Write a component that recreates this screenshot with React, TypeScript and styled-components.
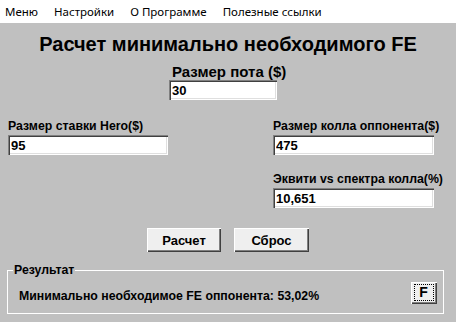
import React from "react";
import styled, { createGlobalStyle } from "styled-components";

const GlobalStyle = createGlobalStyle`
  html, body {
    margin: 0;
    padding: 0;
    background: #c0c0c0;
  }
  body {
    font-family: "Liberation Sans", Arial, sans-serif;
  }
`;

const Window = styled.div`
  width: 456px;
  height: 322px;
  background: #c0c0c0;
  display: flex;
  flex-direction: column;
  overflow: hidden;
`;

const MenuBar = styled.nav`
  height: 23px;
  background: #fff;
  display: flex;
  align-items: center;
  padding-left: 5px;
  gap: 16px;
  font-family: "Noto Sans", sans-serif;
  font-size: 11.5px;
  color: #000;
`;

const MenuItem = styled.span`
  line-height: 23px;
`;

const Body = styled.div`
  flex: 1;
  display: flex;
  flex-direction: column;
  padding: 0 0 0 8px;
`;

const Title = styled.h1`
  margin: 9px 0 0 -8px;
  text-align: center;
  font-size: 20px;
  font-weight: bold;
  line-height: 24px;
`;

const Field = styled.div<{ $width: number }>`
  display: flex;
  flex-direction: column;
  width: ${(p) => p.$width}px;
`;

const Label = styled.label<{ $big?: boolean }>`
  font-size: ${(p) => (p.$big ? 15 : 12.3)}px;
  font-weight: bold;
  line-height: ${(p) => (p.$big ? 17 : 14)}px;
  margin-bottom: ${(p) => (p.$big ? 0 : 2)}px;
  margin-left: ${(p) => (p.$big ? 3 : 0)}px;
  white-space: nowrap;
`;

const Input = styled.input`
  box-sizing: border-box;
  height: 20px;
  width: 100%;
  margin: 0;
  padding: 1px 3px 0;
  font-family: "Liberation Sans", Arial, sans-serif;
  font-size: 13px;
  font-weight: bold;
  background: #fff;
  border: 0;
  outline: none;
  box-shadow: inset 1px 1px 0 #808080, inset 2px 2px 0 #404040,
    inset -1px -1px 0 #ffffff, inset -2px -2px 0 #dfdfdf;
`;

const PotRow = styled.div`
  display: flex;
  margin-top: 7px;
  padding-left: 161px;
`;

const PairRow = styled.div`
  display: flex;
  justify-content: space-between;
  margin-top: 19px;
  padding-right: 22px;
`;

const EquityRow = styled.div`
  display: flex;
  justify-content: flex-end;
  margin-top: 17px;
  padding-right: 22px;
`;

const ButtonRow = styled.div`
  display: flex;
  gap: 13px;
  margin-top: 20px;
  padding-left: 139px;
`;

const Button = styled.button<{ $w: number; $h: number }>`
  display: inline-flex;
  align-items: center;
  justify-content: center;
  width: ${(p) => p.$w}px;
  height: ${(p) => p.$h}px;
  margin: 0;
  padding: 0;
  background: #efefef;
  border: 0;
  font-family: "Liberation Sans", Arial, sans-serif;
  font-size: 13px;
  font-weight: bold;
  color: #000;
  box-shadow: inset 1px 1px 0 #ffffff, inset -1px -1px 0 #404040,
    inset -2px -2px 0 #808080;
`;

const FocusBox = styled.span`
  display: inline-flex;
  align-items: center;
  justify-content: center;
  width: 20px;
  height: 17px;
  margin: -1px 0 0 -1px;
  border: 1px dotted #000;
  box-sizing: border-box;
  font-size: 14px;
`;

const Group = styled.fieldset`
  margin: 12px 0 0 -1px;
  width: 437px;
  box-sizing: border-box;
  padding: 0;
  border: 1px solid #fff;
`;

const Legend = styled.legend`
  padding: 0 1px;
  margin-left: 5px;
  font-size: 12.3px;
  font-weight: bold;
  line-height: 12px;
`;

const GroupContent = styled.div`
  height: 37px;
  display: flex;
  align-items: center;
  justify-content: space-between;
  padding: 0 6px 0 11px;
`;

const ResultText = styled.span`
  font-size: 12.3px;
  font-weight: bold;
  margin-top: 3px;
`;

const FButtonSlot = styled.div`
  margin-top: -4px;
`;

export default function App() {
  return (
    <Window>
      <GlobalStyle />
      <MenuBar>
        <MenuItem>Меню</MenuItem>
        <MenuItem>Настройки</MenuItem>
        <MenuItem>О Программе</MenuItem>
        <MenuItem>Полезные ссылки</MenuItem>
      </MenuBar>
      <Body>
        <Title>Расчет минимально необходимого FE</Title>
        <PotRow>
          <Field $width={108}>
            <Label $big>Размер пота ($)</Label>
            <Input defaultValue="30" />
          </Field>
        </PotRow>
        <PairRow>
          <Field $width={160}>
            <Label>Размер ставки Hero($)</Label>
            <Input defaultValue="95" />
          </Field>
          <Field $width={161}>
            <Label>Размер колла оппонента($)</Label>
            <Input defaultValue="475" />
          </Field>
        </PairRow>
        <EquityRow>
          <Field $width={161}>
            <Label>Эквити vs спектра колла(%)</Label>
            <Input defaultValue="10,651" />
          </Field>
        </EquityRow>
        <ButtonRow>
          <Button $w={74} $h={24}>Расчет</Button>
          <Button $w={75} $h={24}>Сброс</Button>
        </ButtonRow>
        <Group>
          <Legend>Результат</Legend>
          <GroupContent>
            <ResultText>Минимально необходимое FE оппонента: 53,02%</ResultText>
            <FButtonSlot>
              <Button $w={26} $h={22}>
                <FocusBox>F</FocusBox>
              </Button>
            </FButtonSlot>
          </GroupContent>
        </Group>
      </Body>
    </Window>
  );
}
